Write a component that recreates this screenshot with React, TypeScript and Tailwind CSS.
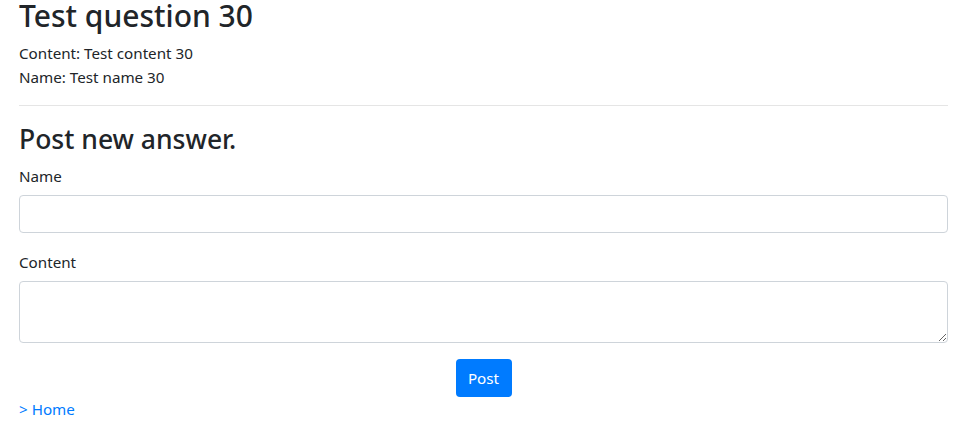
import React from "react";

export default function App() {
  return (
    <div className="min-h-screen bg-white text-[#212529]" style={{ fontFamily: '"Noto Sans", "Open Sans", sans-serif' }}>
      <div className="px-[19px]">
        <h1 className="text-[30px] leading-[32px] font-medium mb-[9px]">Test question 30</h1>
        <div className="text-[15.2px] leading-[24px]">
          <p>Content: Test content 30</p>
          <p>Name: Test name 30</p>
        </div>
        <hr className="my-[16px] border-0 border-t border-black/10" />
        <h3 className="text-[26.5px] leading-[34px] font-medium mb-[8px]">Post new answer.</h3>
        <form className="text-[15.2px] leading-[24px]" onSubmit={(e) => e.preventDefault()}>
          <div className="mb-[17px]">
            <label className="block mb-[7px]">Name</label>
            <input type="text" className="block w-full h-[38px] rounded-[4px] border border-[#ced4da] px-3 py-1.5 outline-none" />
          </div>
          <div className="mb-[16px]">
            <label className="block mb-[7px]">Content</label>
            <textarea rows={2} className="block w-full h-[62px] rounded-[4px] border border-[#ced4da] px-3 py-1.5 outline-none" />
          </div>
          <div className="flex justify-center">
            <button type="submit" className="h-[38px] w-[56px] rounded-[4px] bg-[#007bff] text-white text-[15.2px]">Post</button>
          </div>
        </form>
        <a href="#" className="block text-[#007bff] text-[15.2px] leading-[24px]">&gt; Home</a>
      </div>
    </div>
  );
}
